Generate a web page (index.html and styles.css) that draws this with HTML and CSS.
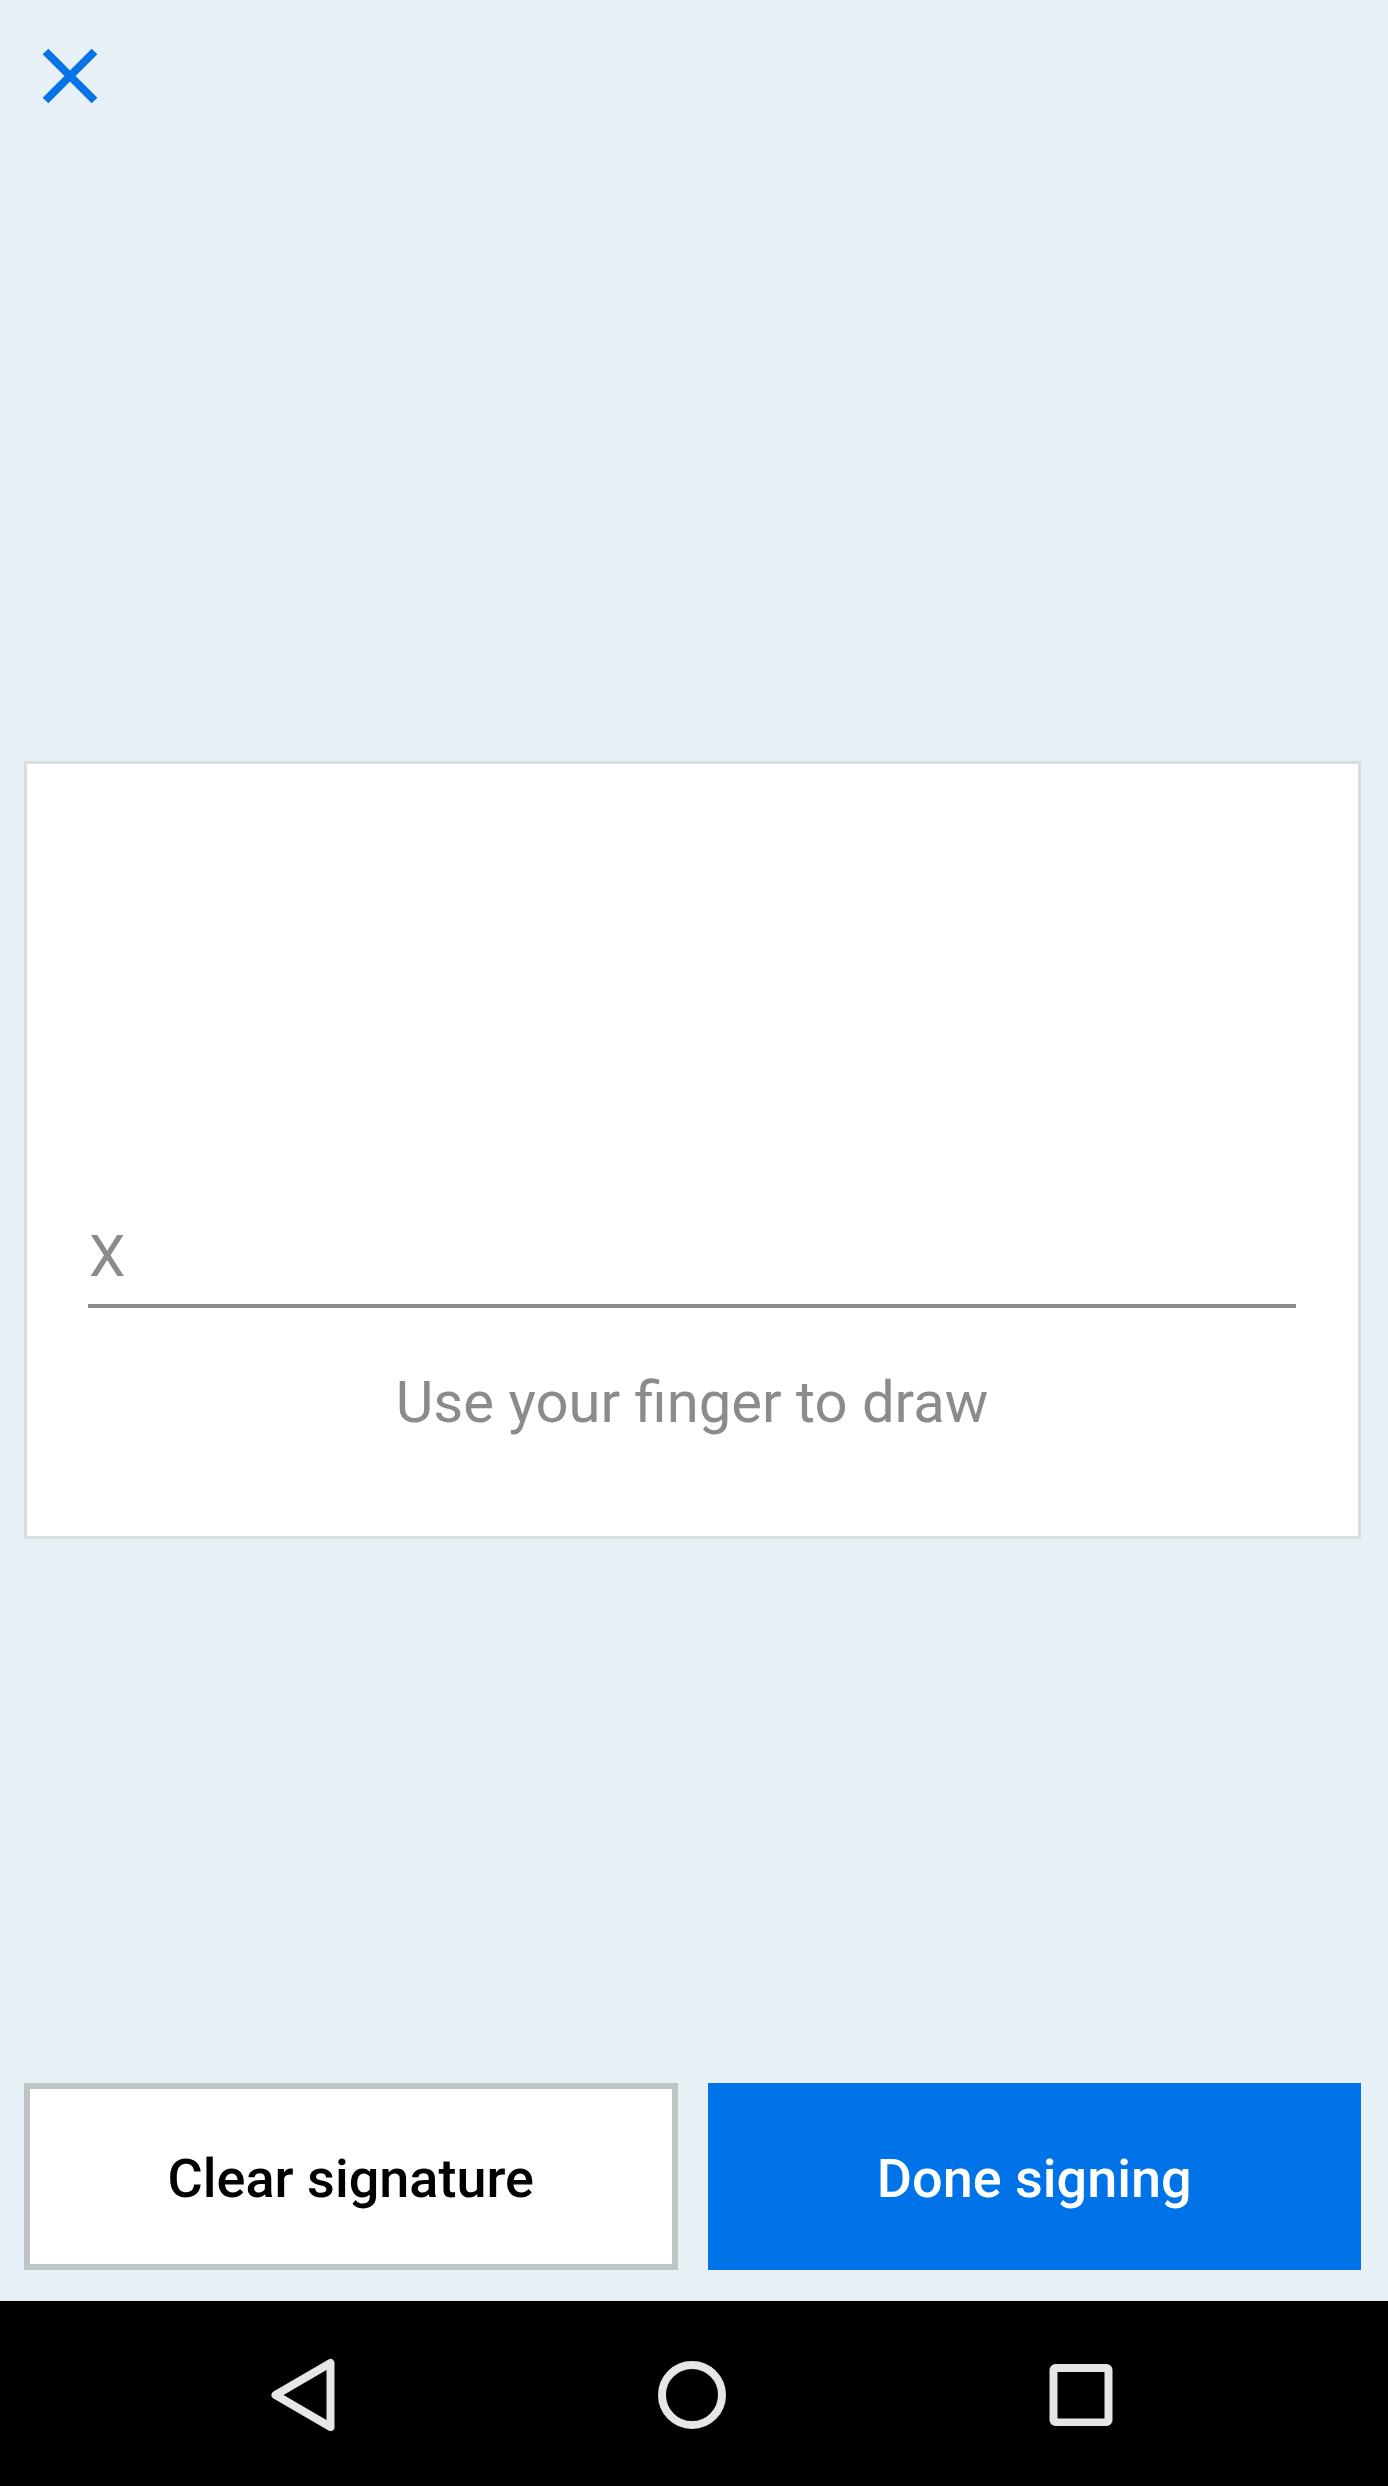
FILE: index.html
```html
<!DOCTYPE html>
<html lang="en">
<head>
<meta charset="utf-8">
<meta name="viewport" content="width=device-width, initial-scale=1">
<title>Signature</title>
<link rel="stylesheet" href="styles.css">
</head>
<body>
<header class="top">
  <button class="close" type="button" aria-label="Close">
    <svg width="56" height="56" viewBox="0 0 56 56"><path d="M3.500 3.500 52.500 52.500M52.500 3.500 3.500 52.500" fill="none" stroke="#0674e6" stroke-width="8"/></svg>
  </button>
</header>
<main class="stage">
  <section class="pad">
    <p class="sign-line">X</p>
    <p class="hint">Use your finger to draw</p>
  </section>
</main>
<footer class="actions">
  <button class="btn btn-clear" type="button">Clear signature</button>
  <button class="btn btn-done" type="button">Done signing</button>
</footer>
<nav class="system-bar">
  <button class="key" type="button" aria-label="Back">
    <svg width="80" height="80" viewBox="0 0 80 80"><path d="M12.500 41 67.500 9V73Z" fill="none" stroke="#e6e6e6" stroke-width="8" stroke-linejoin="round"/></svg>
  </button>
  <button class="key" type="button" aria-label="Home">
    <svg width="80" height="80" viewBox="0 0 80 80"><circle cx="40" cy="41" r="30" fill="none" stroke="#e6e6e6" stroke-width="8"/></svg>
  </button>
  <button class="key" type="button" aria-label="Recent apps">
    <svg width="80" height="80" viewBox="0 0 80 80"><path d="M8.500 16a6 6 0 0 1 6-6h51a6 6 0 0 1 6 6v50a6 6 0 0 1-6 6h-51a6 6 0 0 1-6-6ZM16.500 18v46.500h47V18Z" fill="#e6e6e6" fill-rule="evenodd"/></svg>
  </button>
</nav>
</body>
</html>
```
FILE: styles.css
```css
* {
  box-sizing: border-box;
}

body {
  margin: 0;
  min-height: 100vh;
  display: flex;
  flex-direction: column;
  background: #e7f0f6;
  font-family: Roboto, "Liberation Sans", sans-serif;
}

button {
  margin: 0;
  padding: 0;
  border: 0;
  background: none;
  font: inherit;
  cursor: pointer;
}

svg {
  display: block;
}

.top {
  min-height: 216px;
  padding: 48px 42px;
}

.stage {
  flex: 1;
  display: flex;
  align-items: center;
  padding: 0 27px 0 24px;
}

.pad {
  flex: 1;
  min-height: 778px;
  display: flex;
  flex-direction: column;
  justify-content: flex-end;
  padding: 60px 62px 99px 61px;
  border: 3px solid #d8dddf;
  background: #fff;
  color: #8b8b8b;
  font-size: 58px;
  line-height: 70px;
}

.sign-line {
  margin: 0;
  padding: 0 1px 13px;
  border-bottom: 4px solid #8b8c8b;
}

.hint {
  margin: 59px 0 0;
  text-align: center;
}

.actions {
  display: grid;
  grid-template-columns: 1fr 1fr;
  gap: 30px;
  padding: 0 27px 31px 24px;
}

.btn {
  min-height: 187px;
  padding-top: 4px;
  font-size: 54px;
  font-weight: 500;
  line-height: 66px;
}

.btn-clear {
  border: 6px solid #bfc5c4;
  background: #fff;
  color: #000;
}

.btn-done {
  background: #0073e9;
  color: #fff;
}

.system-bar {
  display: grid;
  grid-template-columns: repeat(3, 1fr);
  min-height: 185px;
  padding: 0 112px 0 108px;
  background: #000;
}

.key {
  display: flex;
  align-items: center;
  justify-content: center;
}
```
